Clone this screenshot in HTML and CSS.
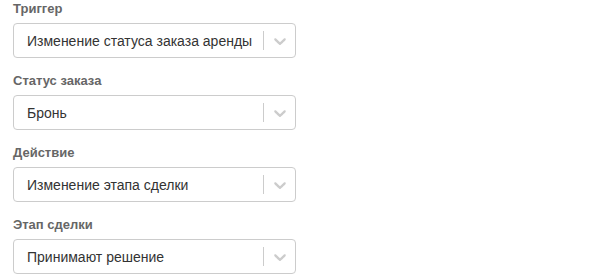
FILE: index.html
```html
<!DOCTYPE html>
<html lang="ru">
<head>
<meta charset="utf-8">
<link rel="stylesheet" href="styles.css">
</head>
<body>
<div class="form">
  <div class="field">
    <div class="label">Триггер</div>
    <div class="select">
      <div class="value">Изменение статуса заказа аренды</div>
      <span class="sep"></span>
      <span class="arrow"><svg width="20" height="20" viewBox="0 0 20 20"><path d="M4.516 7.548c0.436-0.446 1.043-0.481 1.576 0l3.908 3.747 3.908-3.747c0.533-0.481 1.141-0.446 1.574 0 0.436 0.445 0.408 1.197 0 1.615-0.406 0.418-4.695 4.502-4.695 4.502-0.217 0.223-0.502 0.335-0.787 0.335s-0.57-0.112-0.789-0.335c0 0-4.287-4.084-4.695-4.502s-0.436-1.17 0-1.615z" fill="#ccc"/></svg></span>
    </div>
  </div>
  <div class="field">
    <div class="label">Статус заказа</div>
    <div class="select">
      <div class="value">Бронь</div>
      <span class="sep"></span>
      <span class="arrow"><svg width="20" height="20" viewBox="0 0 20 20"><path d="M4.516 7.548c0.436-0.446 1.043-0.481 1.576 0l3.908 3.747 3.908-3.747c0.533-0.481 1.141-0.446 1.574 0 0.436 0.445 0.408 1.197 0 1.615-0.406 0.418-4.695 4.502-4.695 4.502-0.217 0.223-0.502 0.335-0.787 0.335s-0.57-0.112-0.789-0.335c0 0-4.287-4.084-4.695-4.502s-0.436-1.17 0-1.615z" fill="#ccc"/></svg></span>
    </div>
  </div>
  <div class="field">
    <div class="label">Действие</div>
    <div class="select">
      <div class="value">Изменение этапа сделки</div>
      <span class="sep"></span>
      <span class="arrow"><svg width="20" height="20" viewBox="0 0 20 20"><path d="M4.516 7.548c0.436-0.446 1.043-0.481 1.576 0l3.908 3.747 3.908-3.747c0.533-0.481 1.141-0.446 1.574 0 0.436 0.445 0.408 1.197 0 1.615-0.406 0.418-4.695 4.502-4.695 4.502-0.217 0.223-0.502 0.335-0.787 0.335s-0.57-0.112-0.789-0.335c0 0-4.287-4.084-4.695-4.502s-0.436-1.17 0-1.615z" fill="#ccc"/></svg></span>
    </div>
  </div>
  <div class="field">
    <div class="label">Этап сделки</div>
    <div class="select">
      <div class="value">Принимают решение</div>
      <span class="sep"></span>
      <span class="arrow"><svg width="20" height="20" viewBox="0 0 20 20"><path d="M4.516 7.548c0.436-0.446 1.043-0.481 1.576 0l3.908 3.747 3.908-3.747c0.533-0.481 1.141-0.446 1.574 0 0.436 0.445 0.408 1.197 0 1.615-0.406 0.418-4.695 4.502-4.695 4.502-0.217 0.223-0.502 0.335-0.787 0.335s-0.57-0.112-0.789-0.335c0 0-4.287-4.084-4.695-4.502s-0.436-1.17 0-1.615z" fill="#ccc"/></svg></span>
    </div>
  </div>
</div>
</body>
</html>
```
FILE: styles.css
```css
html, body {
  margin: 0;
  padding: 0;
  background: #fff;
}
.form {
  padding: 1px 0 0 13px;
  font-family: "Liberation Sans", Arial, sans-serif;
}
.field {
  margin-bottom: 15px;
}
.label {
  font-size: 13px;
  font-weight: 700;
  color: #666;
  line-height: 16px;
  margin-bottom: 6px;
}
.select {
  box-sizing: border-box;
  width: 283px;
  height: 35px;
  border: 1px solid #ccc;
  border-radius: 4px;
  display: flex;
  align-items: center;
  background: #fff;
}
.value {
  flex: 1;
  padding-left: 13px;
  font-size: 14px;
  color: #333;
}
.sep {
  width: 1px;
  height: 19px;
  background: #ccc;
}
.arrow {
  width: 31px;
  display: flex;
  justify-content: center;
  align-items: center;
}
.arrow svg {
  display: block;
}
```
